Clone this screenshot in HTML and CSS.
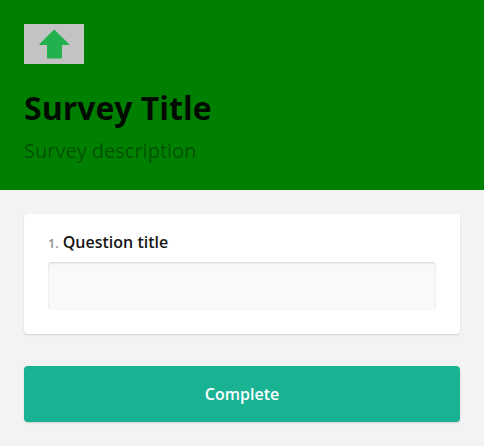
FILE: index.html
```html
<!DOCTYPE html>
<html lang="en">
<head>
<meta charset="utf-8">
<title>Survey Title</title>
<link rel="stylesheet" href="styles.css">
</head>
<body>
<header class="header">
  <div class="logo">
    <svg width="60" height="40" viewBox="0 0 60 40"><path d="M30.200 5.500 L45 20 V21 H38 V33.500 Q38 34.500 37 34.500 H24 Q23 34.500 23 33.500 V21 H15.500 V20 Z" fill="#22b14c"/></svg>
  </div>
  <h1 class="title">Survey Title</h1>
  <p class="description">Survey description</p>
</header>
<main class="body">
  <section class="question">
    <h2 class="question-title"><span class="number">1.</span> Question title</h2>
    <input class="answer" type="text" aria-label="Question title">
  </section>
  <button class="complete" type="button">Complete</button>
</main>
</body>
</html>
```
FILE: styles.css
```css
* { box-sizing: border-box; }
body { margin: 0; background: #f3f3f3; font-family: "Open Sans", sans-serif; }
.header { height: 190px; padding: 24px; background: #008000; }
.logo { width: 60px; height: 40px; background: #c3c3c3; }
.logo svg { display: block; }
.title { margin: 24px 0 0; font-size: 32px; line-height: 40px; font-weight: 700; color: rgba(0,0,0,.91); }
.description { margin: 9px 0 0; font-size: 20px; line-height: 28px; font-weight: 400; color: rgba(0,0,0,.38); }
.body { padding: 24px; }
.question { height: 120px; padding: 16px 24px; background: #fff; border-radius: 4px; box-shadow: 0 1px 2px rgba(0,0,0,.15); }
.question-title { margin: 0 0 8px; font-size: 16px; line-height: 24px; font-weight: 600; color: #161616; }
.number { font-size: 12.5px; line-height: 1; font-weight: 600; color: #909090; }
.answer { display: block; width: 100%; height: 48px; border: 0; border-radius: 4px; background: #f9f9f9; box-shadow: inset 0 1px 2px rgba(0,0,0,.15); }
.complete { display: block; width: 100%; height: 56px; margin-top: 32px; border: 0; border-radius: 4px; background: #19b394; box-shadow: 0 1px 2px rgba(0,0,0,.15); color: #fff; font: 600 16px "Open Sans", sans-serif; }
```
